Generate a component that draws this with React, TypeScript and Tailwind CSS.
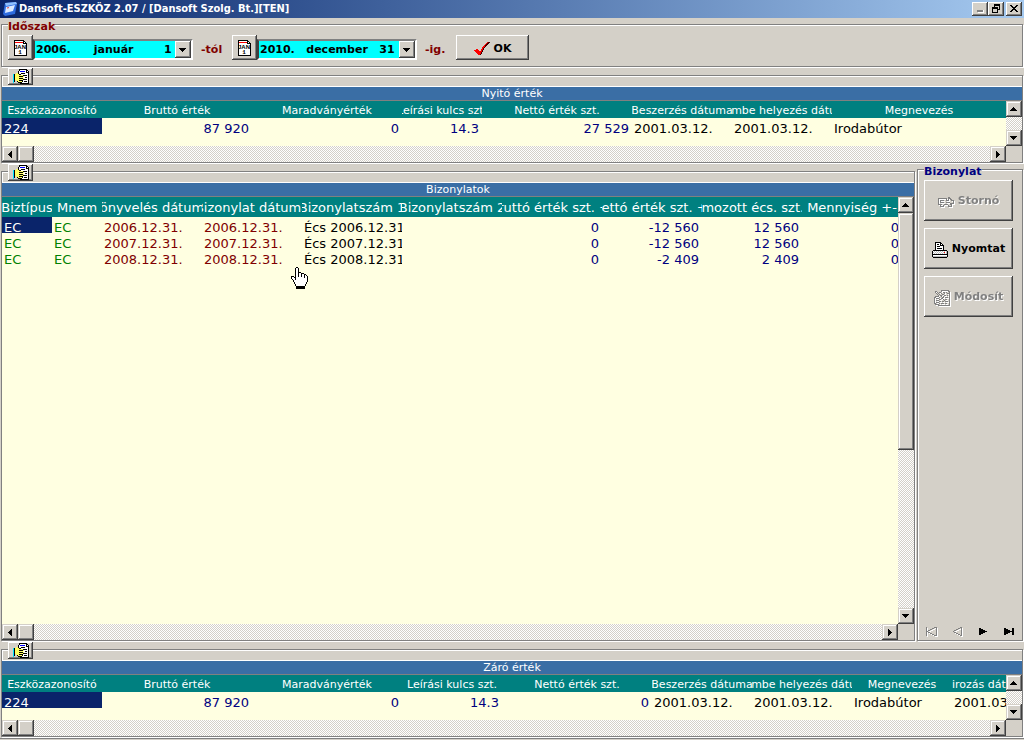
import type { ReactNode } from "react";
import clsx from "clsx";

const raised =
  "bg-[#d4d0c8] shadow-[inset_-1px_-1px_0_#404040,inset_1px_1px_0_#fff,inset_-2px_-2px_0_#808080]";
const scrollRaised =
  "bg-[#d4d0c8] shadow-[inset_-1px_-1px_0_#404040,inset_1px_1px_0_#d4d0c8,inset_-2px_-2px_0_#808080,inset_2px_2px_0_#fff]";
const etched =
  "border border-[#808080] shadow-[1px_1px_0_#fff,inset_1px_1px_0_#fff]";
const dither =
  "bg-[repeating-conic-gradient(#fff_0_25%,#d4d0c8_0_50%)] bg-[length:2px_2px]";

const palette: Record<string, string> = {
  k: "#000000",
  w: "#ffffff",
  y: "#ffff60",
  c: "#00e0ff",
  b: "#0000ff",
  r: "#ff0000",
  g: "#808080",
  s: "#c0c0c0",
};

function Pixels({ rows, className }: { rows: string[]; className?: string }) {
  const width = Math.max(...rows.map((r) => r.length));
  return (
    <svg
      width={width}
      height={rows.length}
      viewBox={`0 0 ${width} ${rows.length}`}
      shapeRendering="crispEdges"
      aria-hidden="true"
      className={clsx("shrink-0", className)}
    >
      {rows.flatMap((row, y) =>
        row
          .split("")
          .map((c, x) =>
            palette[c] ? (
              <rect key={`${x}-${y}`} x={x} y={y} width={1} height={1} fill={palette[c]} />
            ) : null,
          ),
      )}
    </svg>
  );
}

const copyIcon = [
  "......kkkkkkkk..",
  "......kwwwwwwkk.",
  ".....kwbbbbbwkwk",
  ".....kwwwwwwwkkk",
  "...yykwwkkkkwwwk",
  "ckyyyykkwwwwwwwk",
  "ckyyyyyyyykkkkwk",
  "ckyyyykkkkywwwwk",
  "ckyyyyyyyywwkkwk",
  "ckyyyykkkkywwwwk",
  "ckyyyyyyyykkkkwk",
  "ck.yyykkkkwwwwwk",
  "ck..kyyyykwkkkwk",
  "c....kkkkwwwwwwk",
  ".......kkkkkkkkk",
];

const printerIcon = [
  "...kkkkkk.......",
  "...kwwwwkk......",
  "...kwkkwkwk.....",
  "...kwwwwkkkk....",
  "...kwkkkwwwk....",
  "...kwwwwwwwk....",
  "...kwkkkkkwk....",
  "...kwwwwwwwk....",
  ".kkkkkkkkkkkkkk.",
  "kwswswswswswswsk",
  "kswswswswswsrwsk",
  "kwswswswswswswsk",
  "kkkkkkkkkkkkkkkk",
  "kwwwwwwwwwwwwwwk",
  "kssssssssssssssk",
  ".kkkkkkkkkkkkkk.",
];

const stornoIcon = [
  "..........gg....",
  "ggggggggg.ggg...",
  "g.......g.g.gg..",
  "g.gggg..ggg..ggg",
  "g.g............g",
  "g.gggg..gggg...g",
  "g...........gggg",
  "gggg..gggg..gg..",
  "..g..g....g..g..",
  "..gggg....gggg..",
];

const modifyIcon = [
  ".......gggggggg.",
  ".gg....g......gg",
  ".g.g.gg..gg.g..g",
  "..g.g..g..g..ggg",
  "...g.g..gg.....g",
  "....g.gg..gg.g.g",
  ".gggg..g.g.....g",
  "gg...g..gg.ggg.g",
  "g.ggg..gg......g",
  "g....gg..g.gg..g",
  "g.ggg.....g....g",
  "g....gg.gg.ggg.g",
  "g.ggg..........g",
  "gg...g.ggg.gg..g",
  ".gggg..........g",
  "....gggggggggggg",
];

const handCursor = [
  ".....kk..........",
  "....kwwk.........",
  "....kwwk.........",
  "....kwwk.........",
  "....kwwk.........",
  "....kwwkkk.......",
  "....kwwkwwkkk....",
  "....kwwkwwkwwkk..",
  "....kwwkwwkwwkwk.",
  "kkk.kwwkwwkwwkwwk",
  "kwwkkwwwwwwwwkwwk",
  "kwwwkwwwwwwwwwwwk",
  ".kwwkwwwwwwwwwwwk",
  "..kwwwwwwwwwwwwwk",
  "..kwwwwwwwwwwwwwk",
  "...kwwwwwwwwwwwk.",
  "...kwwwwwwwwwwwk.",
  "....kwwwwwwwwwk..",
  "....kwwwwwwwwwk..",
  ".....kkkkkkkkk...",
  ".....kkkkkkkkk...",
  ".....kkkkkkkkk...",
];

const arrows = {
  left: ["...k", "..kk", ".kkk", "kkkk", ".kkk", "..kk", "...k"],
  right: ["k...", "kk..", "kkk.", "kkkk", "kkk.", "kk..", "k..."],
  up: ["...k...", "..kkk..", ".kkkkk.", "kkkkkkk"],
  down: ["kkkkkkk", ".kkkkk.", "..kkk..", "...k..."],
};

function ScrollButton({ dir, label }: { dir: keyof typeof arrows; label: string }) {
  return (
    <button
      type="button"
      aria-label={label}
      className={clsx("flex h-4 w-4 shrink-0 items-center justify-center pr-px", scrollRaised)}
    >
      <Pixels rows={arrows[dir]} />
    </button>
  );
}

type Column = { title: string; width?: number; cell: string; head?: string };

type GridProps = {
  title: string;
  columns: Column[];
  rows: string[][];
  tableClass: string;
  bodyClass: string;
  large?: boolean;
  thumb?: boolean;
};

function DataGrid({ title, columns, rows, tableClass, bodyClass, large, thumb }: GridProps) {
  return (
    <div className="flex min-h-0 flex-1 flex-col pt-[10px]">
      <div className="border-t border-b border-t-white border-b-[#808080] bg-[#3a6ea5] text-center text-[11px] leading-[13px] text-white">
        {title}
      </div>
      <div className="flex min-h-0 flex-1">
        <div className={clsx("min-w-0 flex-1 overflow-hidden bg-[#ffffe1]", bodyClass)}>
          <table className={clsx("table-fixed border-collapse", tableClass)}>
            <colgroup>
              {columns.map((c, i) => (
                <col key={i} style={c.width ? { width: c.width } : undefined} />
              ))}
            </colgroup>
            <thead>
              <tr className="bg-[#008080] text-white">
                {columns.map((c, i) => (
                  <th key={i} scope="col" className="p-0 font-normal">
                    <div
                      className={clsx(
                        "flex overflow-x-clip whitespace-nowrap",
                        c.head ?? "justify-center",
                        large ? "h-5 text-[13px] leading-[22px]" : "h-[17px] text-[11px] leading-[19px]",
                      )}
                    >
                      <span className="shrink-0">{c.title}</span>
                    </div>
                  </th>
                ))}
              </tr>
            </thead>
            <tbody>
              {rows.map((row, r) => (
                <tr key={r}>
                  {row.map((value, i) => (
                    <td key={i} className="p-0">
                      <div
                        className={clsx(
                          "h-4 overflow-x-clip pr-[3px] pl-[2px] text-[13px] leading-[21px] whitespace-nowrap",
                          r === 0 && i === 0 ? "bg-[#0a246a] text-white" : columns[i].cell,
                        )}
                      >
                        {value}
                      </div>
                    </td>
                  ))}
                </tr>
              ))}
            </tbody>
          </table>
        </div>
        <div className={clsx("flex w-4 shrink-0 flex-col", dither)}>
          <ScrollButton dir="up" label="Fel" />
          <div className="flex-1">{thumb && <div className={clsx("h-3/5 w-4", scrollRaised)} />}</div>
          <ScrollButton dir="down" label="Le" />
        </div>
      </div>
      <div className="flex h-4 shrink-0">
        <div className={clsx("flex flex-1", dither)}>
          <ScrollButton dir="left" label="Balra" />
          <div className={clsx("h-4 w-4", scrollRaised)} />
          <div className="flex-1" />
          <ScrollButton dir="right" label="Jobbra" />
        </div>
        <div className="w-4" />
      </div>
    </div>
  );
}

function GridBox({ children, className }: { children: ReactNode; className?: string }) {
  return (
    <section className={clsx("relative mt-2 flex min-w-0 flex-col", etched, className)}>
      <button
        type="button"
        aria-label="Másolás"
        className={clsx("absolute -top-2 left-[6px] flex h-[17px] w-[25px] items-center justify-center", raised)}
      >
        <Pixels rows={copyIcon} />
      </button>
      {children}
    </section>
  );
}

function DateField({ id, label, value }: { id: string; label: string; value: string }) {
  return (
    <div className="flex items-end">
      <button
        type="button"
        aria-label="Naptár"
        className={clsx("flex h-[25px] w-[25px] items-center justify-center", raised)}
      >
        <svg width="13" height="16" viewBox="0 0 13 16" aria-hidden="true">
          <g shapeRendering="crispEdges">
            <path d="M0 0h10v1h1v1h1v1h1v13H0z" fill="#000" />
            <path d="M1 1h8v3h3v11H1z" fill="#fff" />
            <path d="M1 2h8v1H1z" fill="#f00" />
            <path d="M10 2h1v1h-1z" fill="#fff" />
          </g>
          <text x="6" y="9" textAnchor="middle" fontSize="6" fontWeight="bold" fontFamily="Liberation Sans, sans-serif">
            JAN
          </text>
          <text x="6" y="14" textAnchor="middle" fontSize="6" fontWeight="bold" fontFamily="Liberation Mono, monospace">
            1
          </text>
        </svg>
      </button>
      <div className="flex h-[21px] w-40 border-2 border-t-[#808080] border-r-white border-b-white border-l-[#404040] bg-[#d4d0c8]">
        <input
          id={id}
          aria-label={label}
          defaultValue={value}
          className="min-w-0 flex-1 bg-[#00ffff] pl-px text-[11px] leading-[17px] font-bold whitespace-pre text-black outline-none"
        />
        <button
          type="button"
          aria-label="Lenyitás"
          className={clsx("flex w-4 items-center justify-center pr-px", raised)}
        >
          <Pixels rows={arrows.down} />
        </button>
      </div>
    </div>
  );
}

function SideButton({ icon, label, disabled }: { icon: string[]; label: string; disabled?: boolean }) {
  return (
    <button
      type="button"
      disabled={disabled}
      className={clsx(
        "flex h-[41px] w-full items-center justify-center gap-1 pt-[2px] text-[11px] font-bold",
        raised,
        disabled ? "text-[#808080]" : "text-black",
      )}
    >
      <Pixels rows={icon} className={disabled ? "drop-shadow-[1px_1px_0_#fff]" : ""} />
      <span className={disabled ? "drop-shadow-[1px_1px_0_#fff]" : ""}>{label}</span>
    </button>
  );
}

const right = "text-right text-[#000080]";
const black = "text-black";
const green = "text-[#008000]";
const maroon = "text-[#800000]";

const openingColumns: Column[] = [
  { title: "Eszközazonosító", width: 100, cell: black },
  { title: "Bruttó érték", width: 150, cell: right },
  { title: "Maradványérték", width: 150, cell: right },
  { title: "Leírási kulcs szt.", width: 80, cell: right },
  { title: "Nettó érték szt.", width: 150, cell: right },
  { title: "Beszerzés dátuma", width: 100, cell: black },
  { title: "Üzembe helyezés dátuma", width: 100, cell: black },
  { title: "Megnevezés", cell: black },
];

const closingColumns: Column[] = [
  { title: "Eszközazonosító", width: 100, cell: black },
  { title: "Bruttó érték", width: 150, cell: right },
  { title: "Maradványérték", width: 150, cell: right },
  { title: "Leírási kulcs szt.", width: 100, cell: right },
  { title: "Nettó érték szt.", width: 150, cell: right },
  { title: "Beszerzés dátuma", width: 100, cell: black },
  { title: "Üzembe helyezés dátuma", width: 100, cell: black },
  { title: "Megnevezés", width: 100, cell: black },
  { title: "irozás dátuma", width: 100, cell: black, head: "justify-start" },
];

const documentColumns: Column[] = [
  { title: "Biztípus", width: 50, cell: green },
  { title: "Mnem", width: 50, cell: green },
  { title: "Könyvelés dátuma", width: 100, cell: maroon },
  { title: "Bizonylat dátuma", width: 100, cell: maroon },
  { title: "Bizonylatszám 1", width: 100, cell: black },
  { title: "Bizonylatszám 2", width: 100, cell: black },
  { title: "Bruttó érték szt. +-", width: 100, cell: right },
  { title: "Nettó érték szt. +-", width: 100, cell: right },
  { title: "Halmozott écs. szt. +-", width: 100, cell: right },
  { title: "Mennyiség +-", width: 100, cell: right },
];

const documents = [
  ["EC", "EC", "2006.12.31.", "2006.12.31.", "Écs 2006.12.31.", "", "0", "-12 560", "12 560", "0"],
  ["EC", "EC", "2007.12.31.", "2007.12.31.", "Écs 2007.12.31.", "", "0", "-12 560", "12 560", "0"],
  ["EC", "EC", "2008.12.31.", "2008.12.31.", "Écs 2008.12.31.", "", "0", "-2 409", "2 409", "0"],
];

const navButtons = [
  {
    label: "Első",
    disabled: true,
    rows: ["g.......ggg", "g.....gg..g", "g...gg....g", "g.gg......g", "gg........g", "g.gg......g", "g...gg....g", "g.....gg..g", "g.......ggg"],
  },
  {
    label: "Előző",
    disabled: true,
    rows: [".......gg", ".....gg.g", "...gg...g", ".gg.....g", "g.......g", ".gg.....g", "...gg...g", ".....gg.g", ".......gg"],
  },
  { label: "Következő", disabled: false, rows: ["kk......", "kkkk....", "kkkkkk..", "kkkkkkkk", "kkkkkk..", "kkkk....", "kk......"] },
  { label: "Utolsó", disabled: false, rows: ["kk......kk", "kkkk....kk", "kkkkkk..kk", "kkkkkkkkkk", "kkkkkk..kk", "kkkk....kk", "kk......kk"] },
];

const windowButtons = [
  { label: "Kis méret", className: "", rows: ["........", "........", "........", "........", "........", ".ggggggw", ".ggggggw", "..wwwwww"] },
  {
    label: "Előző méret",
    className: "",
    rows: ["..kkkkkk", "..kkkkkk", "..k....k", "kkkkkk.k", "kkkkkk.k", "k....kkk", "k....k..", "k....k..", "kkkkkk.."],
  },
  { label: "Bezárás", className: "ml-[2px]", rows: ["kk....kk", ".kk..kk.", "..kkkk..", "...kk...", "..kkkk..", ".kk..kk.", "kk....kk"] },
];

export default function App() {
  return (
    <main className="flex min-h-screen flex-col bg-[#d4d0c8] font-['DejaVu_Sans',sans-serif]">
      <header className="flex h-[18px] items-center bg-linear-to-r from-[#0a246a] to-[#a6caf0] pr-[2px] pl-[2px]">
        <svg width="16" height="16" viewBox="0 0 16 16" aria-hidden="true">
          <path d="M3 2 14 1l1 2-2 10-10 2-2-2z" fill="#2d6be0" />
          <path d="M3 2 14 1l1 2L4 5z" fill="#8fc0ff" />
          <path d="M4 6 13 4l-2 6-8 2z" fill="#dceaff" />
          <path d="m5 7 2-.4" stroke="#e04040" />
        </svg>
        <h1 className="ml-px flex-1 font-['DejaVu_Sans_Condensed','DejaVu_Sans',sans-serif] text-[11px] leading-4 font-bold text-white">
          Dansoft-ESZKÖZ 2.07 / [Dansoft Szolg. Bt.][TEN]
        </h1>
        {windowButtons.map((b) => (
          <button
            key={b.label}
            type="button"
            aria-label={b.label}
            className={clsx("flex h-[14px] w-4 items-center justify-center pb-px", raised, b.className)}
          >
            <Pixels rows={b.rows} />
          </button>
        ))}
      </header>

      <fieldset className={clsx("mx-px px-[6px] pt-1 pb-[6px]", etched)}>
        <legend className="h-[13px] bg-[#d4d0c8] text-[11px] leading-[17px] font-bold text-[#800000]">Időszak</legend>
        <div className="flex items-end text-[11px] leading-[21px] font-bold text-[#800000]">
          <DateField id="from" label="Kezdő dátum" value="2006.      január        1" />
          <label htmlFor="from" className="ml-2 w-[31px]">
            -tól
          </label>
          <DateField id="to" label="Záró dátum" value="2010.   december   31" />
          <label htmlFor="to" className="ml-2 w-[31px]">
            -ig.
          </label>
          <button
            type="button"
            className={clsx("flex h-[25px] w-[73px] items-center justify-center gap-1 pt-[2px] text-black", raised)}
          >
            <svg width="16" height="14" viewBox="0 0 16 14" shapeRendering="crispEdges" aria-hidden="true">
              <path d="M1 8l3-1 2 3 4-6 5-4h1l-6 7-3 6H5z" fill="#400000" />
              <path d="M0 8l3-1 3 3 3-6 5-4-5 7-3 6H4z" fill="#f00" />
            </svg>
            OK
          </button>
        </div>
      </fieldset>

      <GridBox className="mx-px">
        <DataGrid
          title="Nyitó érték"
          columns={openingColumns}
          rows={[["224", "87 920", "0", "14.3", "27 529", "2001.03.12.", "2001.03.12.", "Irodabútor"]]}
          tableClass="w-full"
          bodyClass="min-h-[45px]"
        />
      </GridBox>

      <div className="mx-px flex flex-1 gap-[2px]">
        <GridBox className="flex-1">
          <DataGrid
            title="Bizonylatok"
            columns={documentColumns}
            rows={documents}
            tableClass="w-[900px]"
            bodyClass="min-h-[120px]"
            large
            thumb
          />
          <Pixels rows={handCursor} className="pointer-events-none absolute top-[95px] left-[289px]" />
        </GridBox>
        <fieldset className={clsx("flex w-[106px] shrink-0 flex-col px-[6px] pt-1", etched)}>
          <legend className="h-[13px] bg-[#d4d0c8] text-[11px] leading-[17px] font-bold text-[#000080]">Bizonylat</legend>
          <div className="flex h-full flex-col justify-between">
            <div className="flex w-[89px] flex-col gap-[7px]">
              <SideButton icon={stornoIcon} label="Stornó" disabled />
              <SideButton icon={printerIcon} label="Nyomtat" />
              <SideButton icon={modifyIcon} label="Módosít" disabled />
            </div>
            <div className="-mx-[6px] flex pb-1">
              {navButtons.map((b) => (
                <button
                  key={b.label}
                  type="button"
                  aria-label={b.label}
                  disabled={b.disabled}
                  className="flex h-[10px] flex-1 items-center justify-center"
                >
                  <Pixels rows={b.rows} className={b.disabled ? "drop-shadow-[1px_1px_0_#fff]" : ""} />
                </button>
              ))}
            </div>
          </div>
        </fieldset>
      </div>

      <GridBox className="mx-px">
        <DataGrid
          title="Záró érték"
          columns={closingColumns}
          rows={[["224", "87 920", "0", "14.3", "0", "2001.03.12.", "2001.03.12.", "Irodabútor", "2001.03.12."]]}
          tableClass="w-[1050px]"
          bodyClass="min-h-[45px]"
        />
      </GridBox>

      <footer className="mt-px h-[3px] border-t border-b border-t-[#808080] border-b-white" />
    </main>
  );
}
